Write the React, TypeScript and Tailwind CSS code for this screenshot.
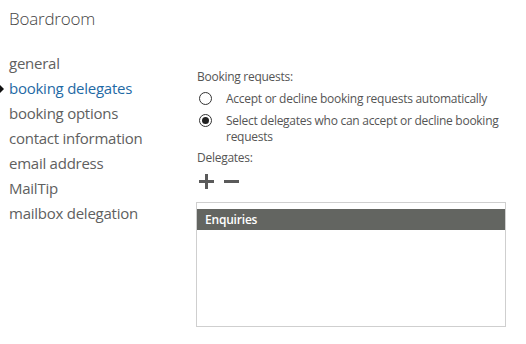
import React from "react"

const navItems = [
  "general",
  "booking delegates",
  "booking options",
  "contact information",
  "email address",
  "MailTip",
  "mailbox delegation",
]

function Radio({ checked }: { checked?: boolean }) {
  return (
    <span className="mt-[1px] flex h-[13px] w-[13px] shrink-0 items-center justify-center rounded-full border border-[#333] bg-white">
      {checked && <span className="h-[7px] w-[7px] rounded-full bg-[#222]" />}
    </span>
  )
}

export default function App() {
  const active = "booking delegates"

  return (
    <div
      className="relative h-[344px] w-[526px] overflow-hidden bg-white text-[#555]"
      style={{ fontFamily: '"Open Sans", "Noto Sans", sans-serif' }}
    >
      {/* Title */}
      <h1 className="pl-[9px] pt-[7px] text-[17px] font-light leading-[24px] tracking-[-0.2px] text-[#444]">Boardroom</h1>

      <div className="flex">
        {/* Left nav */}
        <nav className="w-[196px] shrink-0 pt-[20px]">
          {navItems.map((item) => {
            const isActive = item === active
            return (
              <div key={item} className="relative flex h-[25px] items-center pl-[9px]">
                {isActive && (
                  <span className="absolute left-0 top-[9px] h-0 w-0 border-y-[4px] border-l-[4px] border-y-transparent border-l-[#111]" />
                )}
                <span className={`text-[15px] tracking-[-0.25px] ${isActive ? "text-[#1f6aa5]" : "text-[#606060]"}`}>
                  {item}
                </span>
              </div>
            )
          })}
        </nav>

        {/* Right panel */}
        <div className="w-[310px] shrink-0 pt-[38px] text-[12px] leading-[16px] tracking-[-0.27px]">
          <div className="pl-[1px]">Booking requests:</div>

          <div className="mt-[6px] flex flex-col gap-[6px]">
            <label className="flex items-start gap-[14px] pl-[3px]">
              <Radio />
              <span>Accept or decline booking requests automatically</span>
            </label>
            <label className="flex items-start gap-[14px] pl-[3px]">
              <Radio checked />
              <span className="w-[282px]">Select delegates who can accept or decline booking requests</span>
            </label>
          </div>

          <div className="mt-[5px] pl-[1px]">Delegates:</div>

          {/* Add / remove */}
          <div className="mt-[8px] flex items-center gap-[10px] pl-[3px]">
            <svg width="15" height="15" viewBox="0 0 15 15">
              <path d="M7.5 0 V15 M0 7.5 H15" stroke="#5a5a5a" strokeWidth="3" />
            </svg>
            <svg width="15" height="15" viewBox="0 0 15 15">
              <path d="M0 7.5 H15" stroke="#5a5a5a" strokeWidth="3" />
            </svg>
          </div>

          {/* Delegates list */}
          <div className="mt-[13px] h-[125px] w-[310px] border border-[#cfcfcf] bg-white pt-[6px]">
            <div className="flex h-[21px] items-center bg-[#636561] pl-[8px] text-[12px] font-semibold tracking-[-0.2px] text-white">
              Enquiries
            </div>
          </div>
        </div>
      </div>
    </div>
  )
}
